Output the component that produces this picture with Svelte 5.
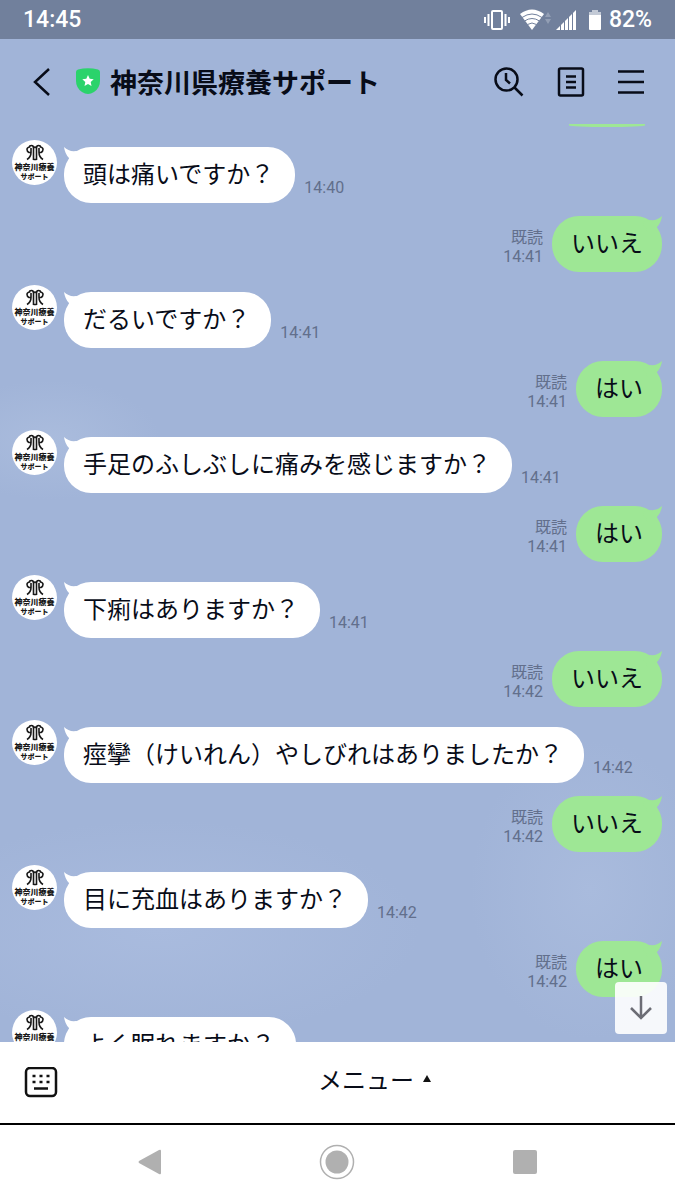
<script lang="ts">
    type Message = {
        mine?: boolean,
        text: string,
        time: string,
    };

    const messages: Message[] = [
        { text: '頭は痛いですか？', time: '14:40' },
        { mine: true, text: 'いいえ', time: '14:41' },
        { text: 'だるいですか？', time: '14:41' },
        { mine: true, text: 'はい', time: '14:41' },
        { text: '手足のふしぶしに痛みを感じますか？', time: '14:41' },
        { mine: true, text: 'はい', time: '14:41' },
        { text: '下痢はありますか？', time: '14:41' },
        { mine: true, text: 'いいえ', time: '14:42' },
        { text: '痙攣（けいれん）やしびれはありましたか？', time: '14:42' },
        { mine: true, text: 'いいえ', time: '14:42' },
        { text: '目に充血はありますか？', time: '14:42' },
        { mine: true, text: 'はい', time: '14:42' },
        { text: 'よく眠れますか？', time: '' },
    ];
</script>

<div class="screen">
    <div class="status">
        <span>14:45</span>
        <div class="indicators">
            <svg width="26" height="20" viewBox="0 0 26 20" fill="none" stroke="#fff" stroke-width="2">
                <rect x="8" y="1" width="10" height="18" rx="1" />
                <path d="M4.500 4v12M1 7v6M21.500 4v12M25 7v6" />
            </svg>
            <svg class="wifi" width="32" height="21" viewBox="0 0 32 21">
                <path d="M0 5Q12-4 24 5L12 21Z" fill="#fff" />
                <path d="M2 8.500q10-7 20 0M4.500 12q7.500-5 15 0M7.500 15.500q4.500-3 9 0" fill="none" stroke="#71809c" stroke-width="1" />
                <path d="M25 8l3-5 3 5zM25 10h6l-3 5z" fill="#929eb4" />
            </svg>
            <svg class="signal" width="21" height="20" viewBox="0 0 21 20">
                <path d="M0 20L20 0V20Z" fill="#fff" />
                <path d="M4.500 13v7M8.500 10v10M12.500 6v14M16.500 2v18" stroke="#71809c" stroke-width="1" />
            </svg>
            <svg class="battery" width="12" height="20" viewBox="0 0 12 20">
                <path d="M3 0h6v2h3v3H0V2h3z" fill="#c3cad6" />
                <path d="M0 5h12v14q0 1-1 1H1q-1 0-1-1z" fill="#fff" />
            </svg>
            <span>82%</span>
        </div>
    </div>

    <header>
        <button class="back" aria-label="戻る">
            <svg width="18" height="30" viewBox="0 0 18 30" fill="none" stroke="#080c18" stroke-width="2.500">
                <path d="M16 2L2 15L16 28" />
            </svg>
        </button>
        <svg class="shield" width="24" height="27" viewBox="0 0 24 27">
            <path d="M2 1.500Q12-1 22 1.500Q24 2 24 4V13Q24 20 18 24Q12 28 6 24Q0 20 0 13V4Q0 2 2 1.500Z" fill="#2bd36b" />
            <path d="M12 7l1.700 3.700 4 .5-3 2.700.8 4-3.500-2-3.500 2 .8-4-3-2.700 4-.5z" fill="#fff" />
        </svg>
        <h1>神奈川県療養サポート</h1>
        <div class="actions">
            <button aria-label="検索">
                <svg width="30" height="30" viewBox="0 0 30 30" fill="none" stroke="#080c18" stroke-width="2.500">
                    <circle cx="12.500" cy="12.500" r="11" />
                    <path d="M20.500 20.500L28.500 28.500" />
                    <path d="M12 6v7l4 3.500" />
                </svg>
            </button>
            <button aria-label="ノート">
                <svg width="28" height="30" viewBox="0 0 28 30" fill="none" stroke="#080c18" stroke-width="2.500">
                    <rect x="2" y="1.500" width="24" height="27" rx="1.500" />
                    <path d="M9 9.500h10M9 15h10M9 20.500h10" />
                </svg>
            </button>
            <button aria-label="メニュー">
                <svg width="26" height="26" viewBox="0 0 26 26" stroke="#080c18" stroke-width="2.500">
                    <path d="M0 2.500h26M0 13h26M0 23.500h26" />
                </svg>
            </button>
        </div>
    </header>

    <main>
        <div class="messages">
            <div class="previous"></div>
            {#each messages as { mine, text, time }}
                <div class={['message', { mine }]}>
                    {#if !mine}
                        <div class="avatar">
                            <svg width="18" height="17" viewBox="0 0 18 17" fill="none" stroke="#181818" stroke-width="1.600">
                                <path d="M7.500 16V4Q7.500 1.500 5.500 1.500T3.500 3Q1 3.500 1 5.500T3 8.500H5Q5 13 1 15.500M5 8.500V4" />
                                <path d="M10.500 16V4Q10.500 1.500 12.500 1.500T14.500 3Q17 3.500 17 5.500T15 8.500H13Q13 13 17 15.500M13 8.500V4" />
                                <path d="M7.500 4Q9 2 10.500 4M7.500 15.500h3" />
                            </svg>
                            <span>神奈川療養</span>
                            <span class="small">サポート</span>
                        </div>
                    {/if}
                    <div class="bubble">
                        <svg class="tail" width="20" height="20" viewBox="0 0 20 20">
                            <path d="M0 0Q5 5 12 4L20 6L14 16L5 16L5 11Q1 7 0 0Z" fill="currentColor" />
                        </svg>
                        {text}
                    </div>
                    <div class="meta">
                        {#if mine}<span>既読</span>{/if}
                        <time>{time}</time>
                    </div>
                </div>
            {/each}
        </div>
        <button class="to-bottom" aria-label="最新のメッセージへ">
            <svg width="24" height="26" viewBox="0 0 24 26" fill="none" stroke="#6c6d75" stroke-width="2.500">
                <path d="M12 1v22M2 13l10 10 10-10" />
            </svg>
        </button>
    </main>

    <footer>
        <button aria-label="キーボード">
            <svg width="34" height="32" viewBox="0 0 34 32" fill="none" stroke="#111" stroke-width="2.500">
                <rect x="2" y="1" width="30" height="28" rx="4" />
                <path d="M8.500 9h3M15.500 9h3M22.500 9h3M8.500 15h3M15.500 15h3M22.500 15h3M10 21.500h14" />
            </svg>
        </button>
        <button class="menu">
            メニュー
            <svg width="8" height="7" viewBox="0 0 8 7"><path d="M4 0l4 7H0z" fill="#111" /></svg>
        </button>
    </footer>

    <nav>
        <button aria-label="戻る">
            <svg width="24" height="26" viewBox="0 0 24 26">
                <path d="M1 12L21 1Q23 0 23 2V24Q23 26 21 25L1 14Q0 13 1 12Z" fill="#b0b0b0" />
            </svg>
        </button>
        <button aria-label="ホーム">
            <svg width="36" height="36" viewBox="0 0 36 36">
                <circle cx="18" cy="18" r="16.500" fill="none" stroke="#b0b0b0" stroke-width="1.500" />
                <circle cx="18" cy="18" r="11.500" fill="#b0b0b0" />
            </svg>
        </button>
        <button aria-label="履歴">
            <svg width="24" height="24" viewBox="0 0 24 24">
                <rect width="24" height="24" rx="2" fill="#b0b0b0" />
            </svg>
        </button>
    </nav>
</div>

<style>
    :global(body) {
        margin: 0;
    }

    .screen {
        --ink: #080c18;
        --mine: #9ee795;

        display: flex;
        flex-direction: column;
        height: 100vh;
        overflow: hidden;
        color: var(--ink);
        font-family: "Noto Sans CJK JP", sans-serif;
        background:
            radial-gradient(ellipse 110px 60px at 50px 440px, #aabcdd, transparent),
            radial-gradient(ellipse 260px 110px at 160px 930px, #a9bbde, transparent),
            radial-gradient(ellipse 120px 150px at 590px 890px, #a9bbdd, transparent),
            #a1b4d8;
    }

    button {
        display: flex;
        align-items: center;
        padding: 0;
        border: 0;
        color: inherit;
        font: inherit;
        background: none;
    }

    svg {
        display: block;
        flex: none;
    }

    .status {
        display: flex;
        align-items: center;
        justify-content: space-between;
        flex: none;
        height: 39px;
        padding: 0 23px;
        color: #fff;
        font-family: Roboto, sans-serif;
        font-size: 23px;
        font-weight: 500;
        background: #71809c;
    }

    .indicators {
        display: flex;
        align-items: center;
    }

    .wifi {
        margin-left: 10px;
    }

    .signal {
        margin-left: 4px;
    }

    .battery {
        margin: 0 8px 0 12px;
    }

    header {
        display: flex;
        align-items: center;
        flex: none;
        height: 85px;
        padding: 0 31px 0 33px;
    }

    .shield {
        margin: 0 10px 0 25px;
    }

    h1 {
        flex: 1;
        margin: 0;
        font-size: 27px;
        font-weight: 700;
        line-height: 32px;
        white-space: nowrap;
    }

    .actions {
        display: flex;
        align-items: center;
        gap: 33px;
    }

    main {
        position: relative;
        flex: 1;
        min-height: 0;
    }

    .messages {
        display: flex;
        flex-direction: column;
        gap: 13px;
        height: 100%;
        overflow: hidden;
    }

    /* lower edge of the message scrolled under the header */
    .previous {
        flex: none;
        align-self: flex-end;
        width: 76px;
        height: 3px;
        margin-right: 30px;
        border-radius: 0 0 50% 50%;
        background: var(--mine);
    }

    .message {
        display: flex;
        flex: none;
        align-items: flex-end;
        padding: 0 13px 0 12px;
    }

    .mine {
        flex-direction: row-reverse;
    }

    .avatar {
        display: flex;
        flex-direction: column;
        align-items: center;
        align-self: flex-start;
        box-sizing: border-box;
        width: 45px;
        height: 45px;
        margin-right: 7px;
        padding-top: 4px;
        border-radius: 50%;
        color: #181818;
        font-size: 8px;
        font-weight: 900;
        line-height: 11px;
        white-space: nowrap;
        background: #fff;
    }

    .small {
        font-size: 7px;
        line-height: 8px;
    }

    .bubble {
        position: relative;
        margin-top: 7px;
        padding: 0 21px 4px 19px;
        border-radius: 27px;
        font-size: 24px;
        line-height: 52px;
        background: #fff;
    }

    .mine .bubble {
        margin-top: 0;
        padding: 0 19px 4px;
        background: var(--mine);
    }

    .tail {
        position: absolute;
        top: 0;
        left: 0;
        color: #fff;
    }

    .mine .tail {
        right: 0;
        left: auto;
        color: var(--mine);
        transform: scaleX(-1);
    }

    .meta {
        display: flex;
        flex-direction: column;
        align-items: flex-end;
        margin: 0 9px 6px;
        color: #626f8c;
        font-family: Roboto, "Noto Sans CJK JP", sans-serif;
        font-size: 16px;
        line-height: 19px;
    }

    .to-bottom {
        position: absolute;
        right: 8px;
        bottom: 8px;
        justify-content: center;
        width: 52px;
        height: 52px;
        border-radius: 4px;
        background: rgb(255 255 255 / 90%);
    }

    footer {
        display: flex;
        align-items: center;
        flex: none;
        height: 81px;
        padding-left: 24px;
        border-bottom: 2px solid #000;
        background: #fff;
    }

    .menu {
        flex: 1;
        justify-content: center;
        gap: 9px;
        margin-left: 16px;
        padding-bottom: 8px;
        font-size: 24px;
        line-height: 36px;
    }

    nav {
        display: grid;
        grid-template-columns: repeat(3, 1fr);
        align-items: center;
        justify-items: center;
        flex: none;
        height: 73px;
        padding: 0 56px 2px;
        background: #fff;
    }
</style>
